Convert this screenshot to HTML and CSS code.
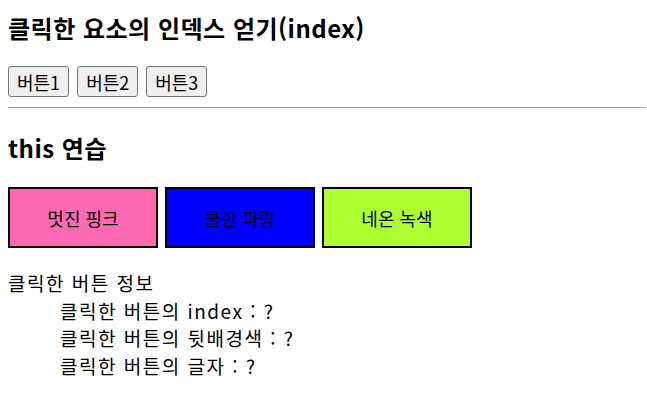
FILE: index.html
```html
<!DOCTYPE html>
<html lang="ko">
<head>
<meta charset="utf-8">
<title>클릭한 요소의 인덱스 얻기</title>
<link rel="stylesheet" href="styles.css">
</head>
<body>
<h3 class="title">클릭한 요소의 인덱스 얻기(index)</h3>
<div class="btn-row">
  <button class="btn">버튼1</button>
  <button class="btn">버튼2</button>
  <button class="btn">버튼3</button>
</div>
<hr class="rule">
<h3 class="subtitle">this 연습</h3>
<div class="box-row">
  <div class="box pink">멋진 핑크</div>
  <div class="box blue">쿨한 파랑</div>
  <div class="box green">네온 녹색</div>
</div>
<div class="info">
  <div class="info-head">클릭한 버튼 정보</div>
  <div class="info-line">클릭한 버튼의 index : ?</div>
  <div class="info-line">클릭한 버튼의 뒷배경색 : ?</div>
  <div class="info-line">클릭한 버튼의 글자 : ?</div>
</div>
</body>
</html>
```
FILE: styles.css
```css
html, body {
  margin: 0;
  padding: 0;
  background: #fff;
}
body {
  padding: 0 8px;
  font-family: "Noto Sans CJK KR", "Noto Sans", sans-serif;
  font-size: 20px;
  color: #000;
}
.title {
  margin: 13px 0 0;
  font-size: 24px;
  line-height: 30px;
  letter-spacing: 0.5px;
  font-weight: bold;
}
.btn-row {
  display: flex;
  gap: 8px;
  margin-top: 23px;
}
.btn {
  height: 31px;
  padding: 0 8px;
  font-family: "Noto Sans CJK KR", sans-serif;
  font-size: 18px;
  line-height: 20px;
  color: #000;
  background: #efefef;
  border: 1px solid #767676;
  border-radius: 3px;
}
.rule {
  margin: 10px -7px 0 0;
  border: none;
  border-top: 1px solid #a0a0a0;
  height: 0;
}
.subtitle {
  margin: 25px 0 0;
  font-size: 24px;
  line-height: 30px;
  letter-spacing: 0.5px;
  font-weight: bold;
}
.box-row {
  display: flex;
  gap: 7px;
  margin-top: 24px;
}
.box {
  width: 146px;
  height: 57px;
  border: 2px solid #000;
  display: flex;
  align-items: center;
  justify-content: center;
  font-size: 18px;
}
.pink { background: #ff69b4; }
.blue { background: #0000ff; }
.green { background: #adff2f; }
.info {
  margin-top: 21px;
  font-size: 19px;
  line-height: 27.6px;
  letter-spacing: 1.5px;
}
.info-line {
  padding-left: 52px;
}
```
